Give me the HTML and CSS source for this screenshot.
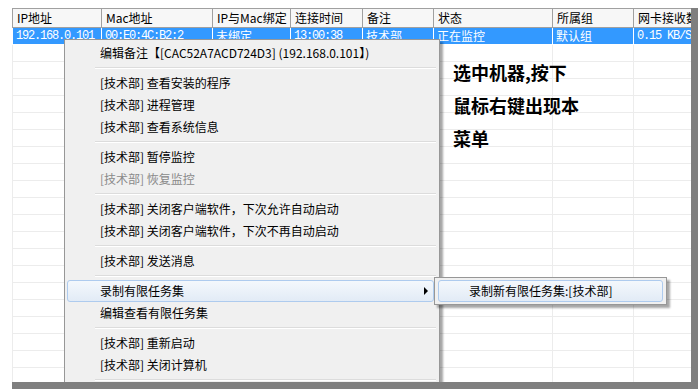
FILE: index.html
```html
<!DOCTYPE html>
<html lang="zh-CN">
<head>
    <meta charset="UTF-8">
    <title>右键菜单</title>
    <link rel="stylesheet" href="styles.css">
</head>
<body>
    <div class="screen">
        <table class="grid">
            <colgroup>
                <col style="width: 89px">
                <col style="width: 111px">
                <col style="width: 78px">
                <col style="width: 72px">
                <col style="width: 71px">
                <col style="width: 119px">
                <col style="width: 81px">
                <col style="width: 99px">
            </colgroup>
            <thead>
                <tr>
                    <th>IP地址</th>
                    <th>Mac地址</th>
                    <th>IP与Mac绑定</th>
                    <th>连接时间</th>
                    <th>备注</th>
                    <th>状态</th>
                    <th>所属组</th>
                    <th>网卡接收数据</th>
                </tr>
            </thead>
            <tbody>
                <tr class="selected">
                    <td class="num">192.168.0.101</td>
                    <td class="num">00:E0:4C:B2:2</td>
                    <td>未绑定</td>
                    <td class="num">13:00:38</td>
                    <td>技术部</td>
                    <td>正在监控</td>
                    <td>默认组</td>
                    <td class="num">0.15 KB/S</td>
                </tr>
                <tr><td></td><td></td><td></td><td></td><td></td><td></td><td></td><td></td></tr>
                <tr><td></td><td></td><td></td><td></td><td></td><td></td><td></td><td></td></tr>
                <tr><td></td><td></td><td></td><td></td><td></td><td></td><td></td><td></td></tr>
                <tr><td></td><td></td><td></td><td></td><td></td><td></td><td></td><td></td></tr>
                <tr><td></td><td></td><td></td><td></td><td></td><td></td><td></td><td></td></tr>
                <tr><td></td><td></td><td></td><td></td><td></td><td></td><td></td><td></td></tr>
                <tr><td></td><td></td><td></td><td></td><td></td><td></td><td></td><td></td></tr>
                <tr><td></td><td></td><td></td><td></td><td></td><td></td><td></td><td></td></tr>
                <tr><td></td><td></td><td></td><td></td><td></td><td></td><td></td><td></td></tr>
                <tr><td></td><td></td><td></td><td></td><td></td><td></td><td></td><td></td></tr>
                <tr><td></td><td></td><td></td><td></td><td></td><td></td><td></td><td></td></tr>
                <tr><td></td><td></td><td></td><td></td><td></td><td></td><td></td><td></td></tr>
                <tr><td></td><td></td><td></td><td></td><td></td><td></td><td></td><td></td></tr>
                <tr><td></td><td></td><td></td><td></td><td></td><td></td><td></td><td></td></tr>
                <tr><td></td><td></td><td></td><td></td><td></td><td></td><td></td><td></td></tr>
                <tr><td></td><td></td><td></td><td></td><td></td><td></td><td></td><td></td></tr>
                <tr><td></td><td></td><td></td><td></td><td></td><td></td><td></td><td></td></tr>
                <tr><td></td><td></td><td></td><td></td><td></td><td></td><td></td><td></td></tr>
                <tr><td></td><td></td><td></td><td></td><td></td><td></td><td></td><td></td></tr>
                <tr><td></td><td></td><td></td><td></td><td></td><td></td><td></td><td></td></tr>
            </tbody>
        </table>

        <!-- 说明文字 -->
        <div class="note">
            <div>选中机器,按下</div>
            <div>鼠标右键出现本</div>
            <div>菜单</div>
        </div>

        <!-- 右键菜单 -->
        <div class="menu">
            <div class="menu-item">编辑备注【[CAC52A7ACD724D3] (192.168.0.101】)</div>
            <div class="sep"></div>
            <div class="menu-item">[技术部] 查看安装的程序</div>
            <div class="menu-item">[技术部] 进程管理</div>
            <div class="menu-item">[技术部] 查看系统信息</div>
            <div class="sep"></div>
            <div class="menu-item">[技术部] 暂停监控</div>
            <div class="menu-item disabled">[技术部] 恢复监控</div>
            <div class="sep"></div>
            <div class="menu-item">[技术部] 关闭客户端软件，下次允许自动启动</div>
            <div class="menu-item">[技术部] 关闭客户端软件，下次不再自动启动</div>
            <div class="sep"></div>
            <div class="menu-item">[技术部] 发送消息</div>
            <div class="sep"></div>
            <div class="menu-item active has-sub">录制有限任务集</div>
            <div class="menu-item">编辑查看有限任务集</div>
            <div class="sep"></div>
            <div class="menu-item">[技术部] 重新启动</div>
            <div class="menu-item">[技术部] 关闭计算机</div>
            <div class="sep"></div>
        </div>

        <div class="submenu">
            <div class="menu-item active">录制新有限任务集:[技术部]</div>
        </div>
    </div>
</body>
</html>
```

FILE: styles.css
```css
body {
    margin: 0;
    background-color: #fff;
    font-family: "Noto Sans CJK SC", "Microsoft YaHei", sans-serif;
    font-size: 12px;
    color: #000;
}

.screen {
    position: relative;
    margin: 8px 0 0 12px;
    width: 679px;
    height: 374px;
    overflow: hidden;
    background-color: #fff;
    border-right: 7px solid #7f7f7f;
    border-bottom: 7px solid #7f7f7f;
}

/* 表格 */
.grid {
    border-collapse: collapse;
    table-layout: fixed;
    width: 720px;
}

.grid th {
    height: 18px;
    padding: 0 4px;
    border: 1px solid #a0a0a0;
    background-color: #f7f7f7;
    font-weight: normal;
    text-align: left;
    white-space: nowrap;
    overflow: hidden;
    line-height: 18px;
}

.grid td {
    height: 16px;
    padding: 0 3px;
    border: 1px solid #ececec;
    white-space: nowrap;
    overflow: hidden;
    line-height: 16px;
}

.grid tr.selected td {
    background-color: #3399ff;
    color: #fff;
    border-color: #fff;
    border-top-color: #a0a0a0;
}

.grid td.num {
    font-family: "Liberation Mono", monospace;
    font-size: 12px;
    letter-spacing: -1.2px;
}

/* 说明文字 */
.note {
    position: absolute;
    left: 441px;
    top: 48px;
    font-size: 18px;
    font-weight: bold;
    line-height: 33px;
}

/* 右键菜单 */
.menu {
    position: absolute;
    left: 52px;
    top: 31px;
    width: 376px;
    box-sizing: border-box;
    padding: 2px 0;
    background-color: #f0f0f0;
    border: 1px solid #979797;
    box-shadow: 3px 3px 2px rgba(0, 0, 0, 0.35);
}

.menu-item {
    position: relative;
    height: 20px;
    line-height: 20px;
    margin: 0 5px 0 2px;
    padding-left: 32px;
    border: 1px solid transparent;
    border-radius: 3px;
    white-space: nowrap;
}

.menu-item.disabled {
    color: #8a8a8a;
}

.menu-item.active {
    border-color: #aecbee;
    background: linear-gradient(#f4f8fc, #e2ebf6);
}

.menu-item.has-sub::after {
    content: "";
    position: absolute;
    right: 5px;
    top: 6px;
    border-left: 4px solid #000;
    border-top: 4px solid transparent;
    border-bottom: 4px solid transparent;
}

.sep {
    height: 8px;
    display: flex;
    align-items: center;
    margin: 0 3px 0 30px;
}

.sep::before {
    content: "";
    flex: 1;
    border-top: 1px solid #dcdcdc;
    border-bottom: 1px solid #fff;
}

.submenu {
    position: absolute;
    left: 422px;
    top: 269px;
    width: 233px;
    box-sizing: border-box;
    padding: 2px 0;
    background-color: #f0f0f0;
    border: 1px solid #979797;
    box-shadow: 3px 3px 2px rgba(0, 0, 0, 0.35);
}

.submenu .menu-item {
    margin: 0 3px;
    padding-left: 30px;
}
```
